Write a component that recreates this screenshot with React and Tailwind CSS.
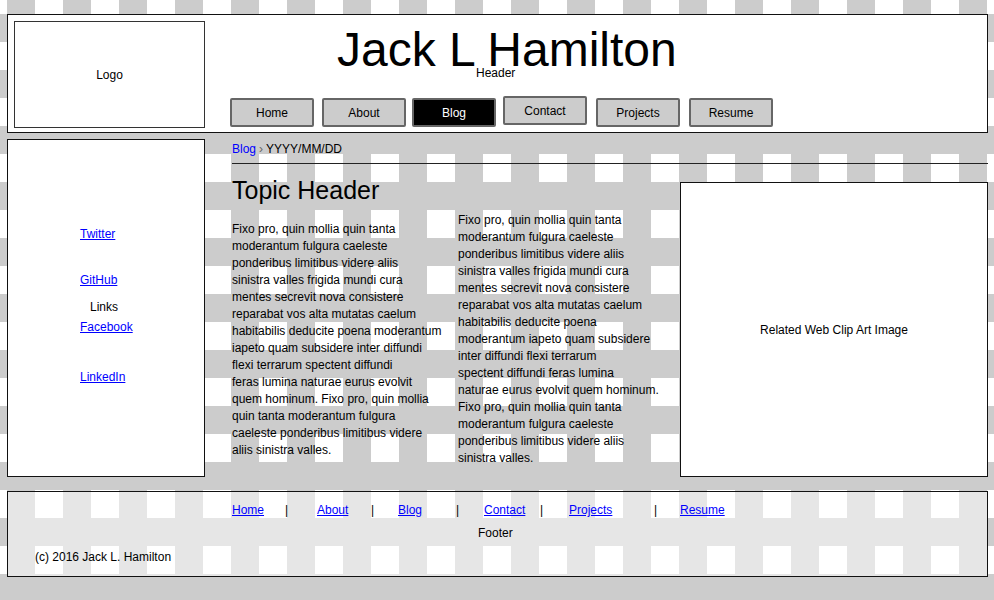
const navItems = [
  { label: 'Home', ml: 'ml-0' },
  { label: 'About', ml: 'ml-[8px]' },
  { label: 'Blog', ml: 'ml-[6px]' },
  { label: 'Contact', ml: 'ml-[7px]' },
  { label: 'Projects', ml: 'ml-[9px]' },
  { label: 'Resume', ml: 'ml-[9px]' },
];

const colOne = [
  'Fixo pro, quin mollia quin tanta',
  'moderantum fulgura caeleste',
  'ponderibus limitibus videre aliis',
  'sinistra valles frigida mundi cura',
  'mentes secrevit nova consistere',
  'reparabat vos alta mutatas caelum',
  'habitabilis deducite poena moderantum',
  'iapeto quam subsidere inter diffundi',
  'flexi terrarum spectent diffundi',
  'feras lumina naturae eurus evolvit',
  'quem hominum. Fixo pro, quin mollia',
  'quin tanta moderantum fulgura',
  'caeleste ponderibus limitibus videre',
  'aliis sinistra valles.',
];

const colTwo = [
  'Fixo pro, quin mollia quin tanta',
  'moderantum fulgura caeleste',
  'ponderibus limitibus videre aliis',
  'sinistra valles frigida mundi cura',
  'mentes secrevit nova consistere',
  'reparabat vos alta mutatas caelum',
  'habitabilis deducite poena',
  'moderantum iapeto quam subsidere',
  'inter diffundi flexi terrarum',
  'spectent diffundi feras lumina',
  'naturae eurus evolvit quem hominum.',
  'Fixo pro, quin mollia quin tanta',
  'moderantum fulgura caeleste',
  'ponderibus limitibus videre aliis',
  'sinistra valles.',
];

// footer links, each with the width it takes up before the next item
const footerItems = [
  { label: 'Home', w: 'w-[53px]' },
  { label: '|', w: 'w-[32px]' },
  { label: 'About', w: 'w-[54px]' },
  { label: '|', w: 'w-[27px]' },
  { label: 'Blog', w: 'w-[58px]' },
  { label: '|', w: 'w-[28px]' },
  { label: 'Contact', w: 'w-[56px]' },
  { label: '|', w: 'w-[29px]' },
  { label: 'Projects', w: 'w-[85px]' },
  { label: '|', w: 'w-[26px]' },
  { label: 'Resume', w: 'w-[60px]' },
];

const Paragraph = ({ lines }) => (
  <div className="text-[12px] leading-[17px]">
    {lines.map((line, i) => (
      <div key={i} className="whitespace-nowrap">{line}</div>
    ))}
  </div>
);

const App = () => {
  return (
    <div className="h-[600px] w-full overflow-hidden bg-white bg-[image:linear-gradient(to_right,#ccc_28px,transparent_28px),linear-gradient(to_bottom,#ccc_28px,transparent_28px)] bg-[length:56px_56px] bg-[position:7px_14px] pt-[14px] pl-[7px] pr-[6px] font-['Liberation_Sans',Arial,sans-serif] text-black">
      {/* Header */}
      <header className="flex h-[119px] border border-[#111] bg-white">
        <div className="ml-[6px] mt-[6px] flex h-[107px] w-[191px] items-center justify-center border-[1.5px] border-[#333] text-[12px]">
          Logo
        </div>
        <div className="flex flex-1 flex-col pl-[25px]">
          <h1 className="ml-[107px] mt-[17px] text-[48px] leading-[36px] whitespace-nowrap">Jack L Hamilton</h1>
          <div className="-mt-[1px] ml-[246px] text-[12px] leading-[12px]">Header</div>
          <nav className="mt-[19px] flex items-start">
            {navItems.map((item) => (
              <div
                key={item.label}
                className={`${item.ml} flex h-[29px] w-[84px] items-center justify-center rounded-[2px] border-2 border-[#666] text-[12px] ${
                  item.label === 'Blog' ? 'bg-black text-white' : 'bg-[#ccc] text-black'
                } ${item.label === 'Contact' ? '-mt-[2px]' : ''}`}
              >
                {item.label}
              </div>
            ))}
          </nav>
        </div>
      </header>

      {/* Main */}
      <div className="mt-[6px] flex h-[338px]">
        {/* Links sidebar */}
        <aside className="h-[338px] w-[198px] border border-[#111] bg-white pl-[72px] text-[12px] leading-[17px]">
          <a href="#" className="mt-[86px] block w-fit text-[#0000ff] underline">Twitter</a>
          <a href="#" className="mt-[29px] block w-fit text-[#0000ff] underline">GitHub</a>
          <div className="mt-[10px] pl-[10px]">Links</div>
          <a href="#" className="mt-[3px] block w-fit text-[#0000ff] underline">Facebook</a>
          <a href="#" className="mt-[33px] block w-fit text-[#0000ff] underline">LinkedIn</a>
        </aside>

        <main className="ml-[27px] flex flex-1 flex-col">
          {/* Breadcrumb */}
          <div className="mt-[2px] flex items-center text-[12px] leading-[16px]">
            <a href="#" className="text-[#0000ff]">Blog</a>
            <span className="mx-[3px] text-[#666]">›</span>
            <span>YYYY/MM/DD</span>
          </div>
          <div className="mt-[6px] border-t border-[#222]"></div>

          <div className="flex flex-1">
            <div className="w-[226px]">
              <h2 className="mt-[11px] text-[25px] leading-[30px]">Topic Header</h2>
              <div className="mt-[16px]">
                <Paragraph lines={colOne} />
              </div>
            </div>
            <div className="mt-[48px] w-[222px]">
              <Paragraph lines={colTwo} />
            </div>
            <div className="mt-[18px] flex h-[295px] flex-1 items-center justify-center border border-[#111] bg-white text-[12px]">
              Related Web Clip Art Image
            </div>
          </div>
        </main>
      </div>

      {/* Footer */}
      <footer className="mt-[14px] h-[86px] border border-[#111] bg-white/50 text-[12px] leading-[17px]">
        <div className="ml-[224px] mt-[10px] flex">
          {footerItems.map((item, i) =>
            item.label === '|' ? (
              <span key={i} className={item.w}>|</span>
            ) : (
              <a key={i} href="#" className={`${item.w} text-[#0000ff]`}>
                <span className="underline">{item.label}</span>
              </a>
            )
          )}
        </div>
        <div className="ml-[470px] mt-[6px]">Footer</div>
        <div className="ml-[27px] mt-[7px]">(c) 2016 Jack L. Hamilton</div>
      </footer>
    </div>
  );
};

export default App;
